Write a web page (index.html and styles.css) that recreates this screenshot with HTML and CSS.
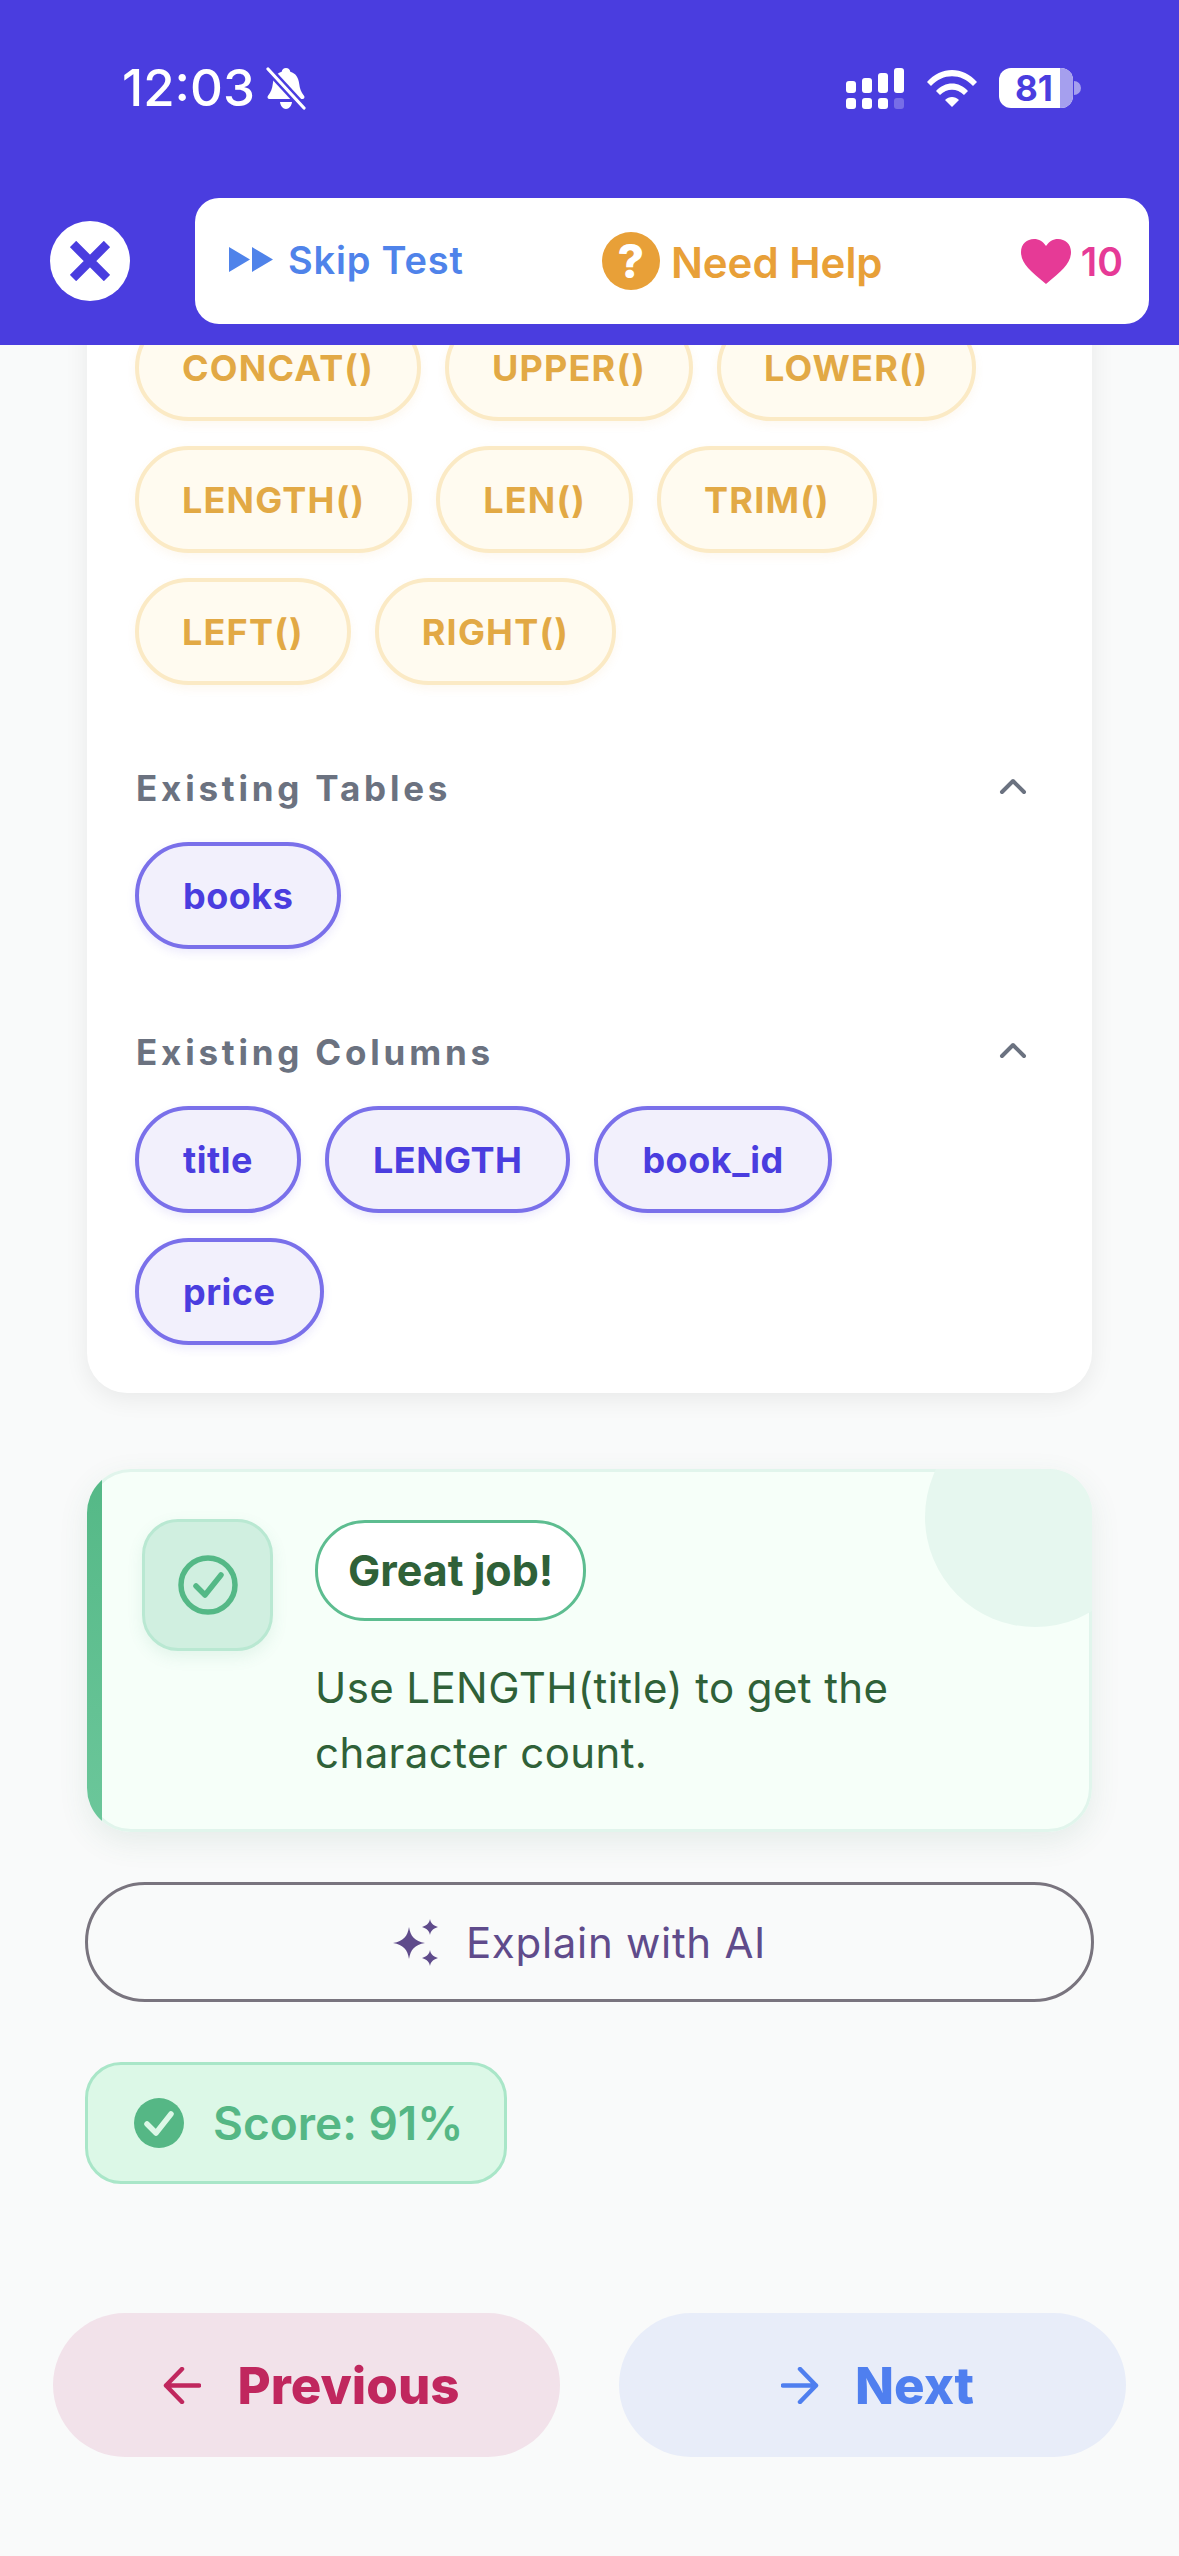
FILE: index.html
```html
<!DOCTYPE html>
<html lang="en">
<head>
  <meta charset="UTF-8">
  <meta name="viewport" content="width=device-width, initial-scale=1.0">
  <title>Test</title>
  <link rel="stylesheet" href="styles.css">
</head>
<body>
  <header class="top">
    <div class="status">
      <div class="status-left">
        <span class="time">12:03</span>
        <svg class="bell" viewBox="0 0 40 43">
          <path d="M20 1c2.400 0 4 1.700 4.300 3.700 5.500 1.500 8.200 6 8.900 12 .6 5 1.800 8.500 4.800 12 1.100 1.300.3 3.300-1.500 3.300H3.500c-1.800 0-2.600-2-1.500-3.300 3-3.500 4.200-7 4.800-12 .7-6 3.400-10.500 8.900-12C16 2.700 17.600 1 20 1zM14 35h12c-.5 4-3 7-6 7s-5.500-3-6-7z" fill="#fff"/>
          <path d="M2 2l36 39" stroke="#4a3ddf" stroke-width="8"/>
          <path d="M2 2l36 39" stroke="#fff" stroke-width="3.200" stroke-linecap="round"/>
        </svg>
      </div>
      <div class="status-right">
        <svg class="signal" viewBox="0 0 58 41" fill="#fff">
          <rect x="0" y="13" width="10" height="12" rx="3"/>
          <rect x="16" y="10" width="10" height="15" rx="3"/>
          <rect x="32" y="5" width="10" height="20" rx="3"/>
          <rect x="48" y="0" width="10" height="25" rx="3"/>
          <rect x="0" y="30" width="10" height="11" rx="3"/>
          <rect x="16" y="30" width="10" height="11" rx="3"/>
          <rect x="32" y="30" width="10" height="11" rx="3"/>
          <rect x="48" y="30" width="10" height="11" rx="3" opacity="0.25"/>
        </svg>
        <svg class="wifi" viewBox="0 0 50 37" fill="#fff">
          <path d="M0 12C14-4 36-4 50 12l-4 4C34 3 16 3 4 16z"/>
          <path d="M9 21c9-10 23-10 32 0l-4 4c-7-7-17-7-24 0z"/>
          <path d="M18 30c4-4 10-4 14 0l-7 7z"/>
        </svg>
        <div class="battery">
          <div class="battery-body">
            <span class="battery-num">81</span>
            <span class="battery-rest"></span>
          </div>
          <span class="battery-nub"></span>
        </div>
      </div>
    </div>
    <div class="toolbar">
      <button class="close">
        <svg viewBox="0 0 40 40"><path d="M3 3l34 34M37 3L3 37" stroke="#4a3ddf" stroke-width="9"/></svg>
      </button>
      <div class="panel">
        <div class="skip">
          <svg viewBox="0 0 44 27" fill="#4f83ea"><path d="M0 1l21 12.500L0 26zM23 1l21 12.500L23 26z"/></svg>
          <span>Skip Test</span>
        </div>
        <div class="help">
          <span class="help-mark">?</span>
          <span class="help-label">Need Help</span>
        </div>
        <div class="lives">
          <svg viewBox="0 0 50 45" fill="#e63a96"><path d="M25 45C9 32 0 24 0 13 0 5 6 0 13 0c5 0 9 2.500 12 7 3-4.500 7-7 12-7 7 0 13 5 13 13 0 11-9 19-25 32z"/></svg>
          <span>10</span>
        </div>
      </div>
    </div>
  </header>

  <main class="content">
    <section class="card">
      <div class="chips">
        <span class="chip chip-func">CONCAT()</span>
        <span class="chip chip-func">UPPER()</span>
        <span class="chip chip-func">LOWER()</span>
        <span class="chip chip-func">LENGTH()</span>
        <span class="chip chip-func">LEN()</span>
        <span class="chip chip-func">TRIM()</span>
        <span class="chip chip-func">LEFT()</span>
        <span class="chip chip-func">RIGHT()</span>
      </div>

      <div class="group-head">
        <span>Existing Tables</span>
        <svg viewBox="0 0 28 18"><path d="M3 15L14 4l11 11" fill="none" stroke="#6b7280" stroke-width="4" stroke-linecap="round" stroke-linejoin="round"/></svg>
      </div>
      <div class="chips">
        <span class="chip chip-name">books</span>
      </div>

      <div class="group-head">
        <span>Existing Columns</span>
        <svg viewBox="0 0 28 18"><path d="M3 15L14 4l11 11" fill="none" stroke="#6b7280" stroke-width="4" stroke-linecap="round" stroke-linejoin="round"/></svg>
      </div>
      <div class="chips">
        <span class="chip chip-name">title</span>
        <span class="chip chip-name">LENGTH</span>
        <span class="chip chip-name">book_id</span>
        <span class="chip chip-name">price</span>
      </div>
    </section>

    <section class="result">
      <div class="result-icon">
        <svg viewBox="0 0 60 60" fill="none" stroke="#54b886" stroke-width="5.500"><circle cx="30" cy="30" r="27"/><path d="M18 31l9 9 16-20" stroke-linecap="round" stroke-linejoin="round"/></svg>
      </div>
      <div class="result-body">
        <span class="result-tag">Great job!</span>
        <p class="result-text">Use LENGTH(title) to get the character count.</p>
      </div>
    </section>

    <button class="explain">
      <svg viewBox="0 0 45 47" fill="#5f4b8b">
        <path d="M16 8c1.500 9.500 5.500 14 16 16-10.500 2-14.500 6.500-16 16-1.500-9.500-5.500-14-16-16 10.500-2 14.500-6.500 16-16z"/>
        <path d="M37 0c.8 4 2.500 6 8 8-5.500 2-7.200 4-8 8-.8-4-2.500-6-8-8 5.500-2 7.200-4 8-8z"/>
        <path d="M37 31c.8 4 2.500 6 8 8-5.500 2-7.200 4-8 8-.8-4-2.500-6-8-8 5.500-2 7.200-4 8-8z"/>
      </svg>
      <span>Explain with AI</span>
    </button>

    <div class="score">
      <svg viewBox="0 0 50 50"><circle cx="25" cy="25" r="25" fill="#55b785"/><path d="M13 26l9 9 15-19" fill="none" stroke="#dcf8e7" stroke-width="5.500" stroke-linecap="round" stroke-linejoin="round"/></svg>
      <span>Score: 91%</span>
    </div>
  </main>

  <footer class="nav">
    <button class="nav-btn nav-prev">
      <svg viewBox="0 0 38 37"><path d="M36 18.500H3M19 2L3 18.500 19 35" fill="none" stroke="#c0275e" stroke-width="4.500" stroke-linecap="round" stroke-linejoin="round"/></svg>
      <span>Previous</span>
    </button>
    <button class="nav-btn nav-next">
      <svg viewBox="0 0 38 37"><path d="M2 18.500h33M19 2l16 16.500L19 35" fill="none" stroke="#4f7fef" stroke-width="4.500" stroke-linecap="round" stroke-linejoin="round"/></svg>
      <span>Next</span>
    </button>
  </footer>
</body>
</html>
```

FILE: styles.css
```css
* {
  box-sizing: border-box;
}

html,
body {
  margin: 0;
  padding: 0;
}

body {
  width: 1179px;
  height: 2556px;
  overflow: hidden;
  font-family: Inter, "Liberation Sans", sans-serif;
  background-color: #f9fafa;
}

button {
  font-family: inherit;
  cursor: pointer;
}

/* top bar */
.top {
  height: 345px;
  background-color: #4a3ddf;
  color: #fff;
}

.status {
  height: 198px;
  padding: 60px 98px 0 122px;
  display: flex;
  justify-content: space-between;
  align-items: flex-start;
}

.status-left {
  display: flex;
  align-items: center;
  gap: 11px;
  height: 56px;
}

.time {
  font-size: 51px;
  font-weight: 500;
  line-height: 56px;
}

.bell {
  width: 40px;
  height: 43px;
}

.status-right {
  display: flex;
  align-items: center;
  height: 42px;
  margin-top: 7px;
}

.signal {
  width: 58px;
  height: 41px;
}

.wifi {
  width: 50px;
  height: 37px;
  margin-left: 23px;
}

.battery {
  display: flex;
  align-items: center;
  margin-left: 22px;
}

.battery-body {
  display: flex;
  width: 74px;
  height: 40px;
  border-radius: 12px;
  overflow: hidden;
  background-color: #fff;
}

.battery-num {
  width: 61px;
  padding-left: 16px;
  font-size: 35px;
  font-weight: 700;
  line-height: 40px;
  color: #4a3ddf;
}

.battery-rest {
  flex: 1;
  background-color: #a59fee;
}

.battery-nub {
  width: 7px;
  height: 14px;
  margin-left: 1px;
  border-radius: 0 7px 7px 0;
  background-color: #a59fee;
}

.toolbar {
  display: flex;
  align-items: center;
  height: 126px;
  padding: 0 30px 0 50px;
}

.close {
  width: 80px;
  height: 80px;
  padding: 20px;
  border: none;
  border-radius: 50%;
  background-color: #fff;
  margin-right: 65px;
}

.close svg {
  display: block;
  width: 40px;
  height: 40px;
}

.panel {
  flex: 1;
  height: 126px;
  padding: 0 26px 0 34px;
  display: flex;
  justify-content: space-between;
  align-items: center;
  border-radius: 24px;
  background-color: #fff;
}

.skip {
  display: flex;
  align-items: center;
  gap: 15px;
  font-size: 38px;
  font-weight: 600;
  letter-spacing: 0.8px;
  color: #4f83ea;
  margin-top: -3px;
}

.skip svg {
  width: 44px;
  height: 27px;
}

.help {
  display: flex;
  align-items: center;
  gap: 11px;
  font-size: 42px;
  font-weight: 600;
  color: #e8a038;
}

.help-label {
  margin-top: 3px;
}

.help-mark {
  width: 58px;
  height: 58px;
  border-radius: 50%;
  background-color: #e8a038;
  color: #fff;
  font-size: 46px;
  font-weight: 800;
  line-height: 58px;
  text-align: center;
}

.lives {
  display: flex;
  align-items: center;
  gap: 10px;
  font-size: 39px;
  font-weight: 600;
  color: #e63a96;
}

.lives svg {
  width: 50px;
  height: 45px;
}

/* scrolling area */
.content {
  height: 1900px;
  overflow: hidden;
  padding: 0 85px;
  display: flex;
  flex-direction: column;
  align-items: stretch;
}

.card {
  flex: none;
  margin: -79px 2px 0;
  padding: 48px 65px 48px 48px;
  border-radius: 40px;
  background-color: #fff;
  box-shadow: 0 6px 24px rgba(0, 0, 0, 0.07);
}

.chips {
  display: flex;
  flex-wrap: wrap;
  gap: 25px 24px;
}

.chip {
  height: 107px;
  padding: 0 44px;
  display: flex;
  align-items: center;
  border-radius: 54px;
  border: 4px solid;
  font-size: 36px;
  font-weight: 700;
}

.chip-func {
  padding: 0 43px;
  letter-spacing: 1.2px;
  background-color: #fffbf0;
  border-color: #fbeac5;
  color: #e2a945;
  box-shadow: 0 4px 10px rgba(226, 169, 69, 0.08);
}

.chip-name {
  letter-spacing: 0.5px;
  background-color: #f2f0fc;
  border-color: #7a70ea;
  color: #4a3ddf;
  box-shadow: 0 4px 10px rgba(74, 61, 223, 0.1);
}

.group-head {
  height: 44px;
  margin: 81px 0 32px;
  padding-left: 1px;
  display: flex;
  justify-content: space-between;
  align-items: center;
  font-size: 35px;
  font-weight: 700;
  letter-spacing: 3.8px;
  color: #6b7280;
}

.group-head svg {
  width: 28px;
  height: 18px;
  margin-top: -4px;
}

.result {
  flex: none;
  position: relative;
  overflow: hidden;
  display: flex;
  gap: 42px;
  margin: 76px 2px 0;
  padding: 50px 48px 47px 55px;
  border-radius: 44px;
  background-color: #f6fff9;
  box-shadow: inset 0 0 0 3px #e1f5ec, 0 10px 30px rgba(60, 120, 90, 0.1);
}

.result::before {
  content: "";
  position: absolute;
  left: 0;
  top: 0;
  bottom: 0;
  width: 15px;
  background: linear-gradient(#54b886, #6cc79b);
}

.result::after {
  content: "";
  position: absolute;
  top: -62px;
  right: -53px;
  width: 220px;
  height: 220px;
  border-radius: 50%;
  background-color: #e6f7ef;
}

.result-icon {
  flex: none;
  width: 131px;
  height: 132px;
  display: flex;
  align-items: center;
  justify-content: center;
  border-radius: 36px;
  border: 3px solid #b9e8d2;
  background-color: #d0efe0;
  box-shadow: 0 6px 16px rgba(60, 150, 110, 0.1);
}

.result-icon svg {
  width: 60px;
  height: 60px;
}

.result-body {
  position: relative;
  z-index: 1;
  flex: 1;
  padding-top: 1px;
}

.result-tag {
  display: inline-block;
  height: 101px;
  padding: 0 30px;
  border-radius: 50px;
  border: 3px solid #5dbd90;
  background-color: #fff;
  font-size: 43px;
  font-weight: 700;
  line-height: 95px;
  color: #2f6138;
}

.result-text {
  margin: 34px 0 0;
  font-size: 42px;
  line-height: 65px;
  letter-spacing: 0.4px;
  color: #2f6138;
}

.explain {
  flex: none;
  height: 120px;
  margin-top: 50px;
  display: flex;
  align-items: center;
  justify-content: center;
  gap: 28px;
  padding: 0 20px 0 0;
  border: 3px solid #79747e;
  border-radius: 60px;
  background: none;
  font-size: 42px;
  letter-spacing: 0.7px;
  color: #5f4b8b;
}

.explain svg {
  width: 45px;
  height: 47px;
}

.score {
  flex: none;
  align-self: flex-start;
  height: 122px;
  margin-top: 60px;
  padding: 0 40px 0 46px;
  display: flex;
  align-items: center;
  gap: 29px;
  border-radius: 36px;
  border: 3px solid #a9e6c8;
  background-color: #dcf8e7;
  font-size: 46px;
  font-weight: 600;
  color: #55b785;
}

.score svg {
  width: 50px;
  height: 50px;
}

/* bottom buttons */
.nav {
  margin-top: 68px;
  padding: 0 53px;
  display: flex;
  gap: 59px;
}

.nav-btn {
  flex: 1;
  height: 144px;
  display: flex;
  align-items: center;
  justify-content: center;
  gap: 36px;
  padding: 0 0 0 10px;
  border: none;
  border-radius: 72px;
  font-size: 51px;
  font-weight: 800;
}

.nav-btn svg {
  width: 38px;
  height: 37px;
}

.nav-prev {
  background-color: #f2e2ea;
  color: #c0275e;
}

.nav-next {
  background-color: #e8edf9;
  color: #4f7fef;
}
```
